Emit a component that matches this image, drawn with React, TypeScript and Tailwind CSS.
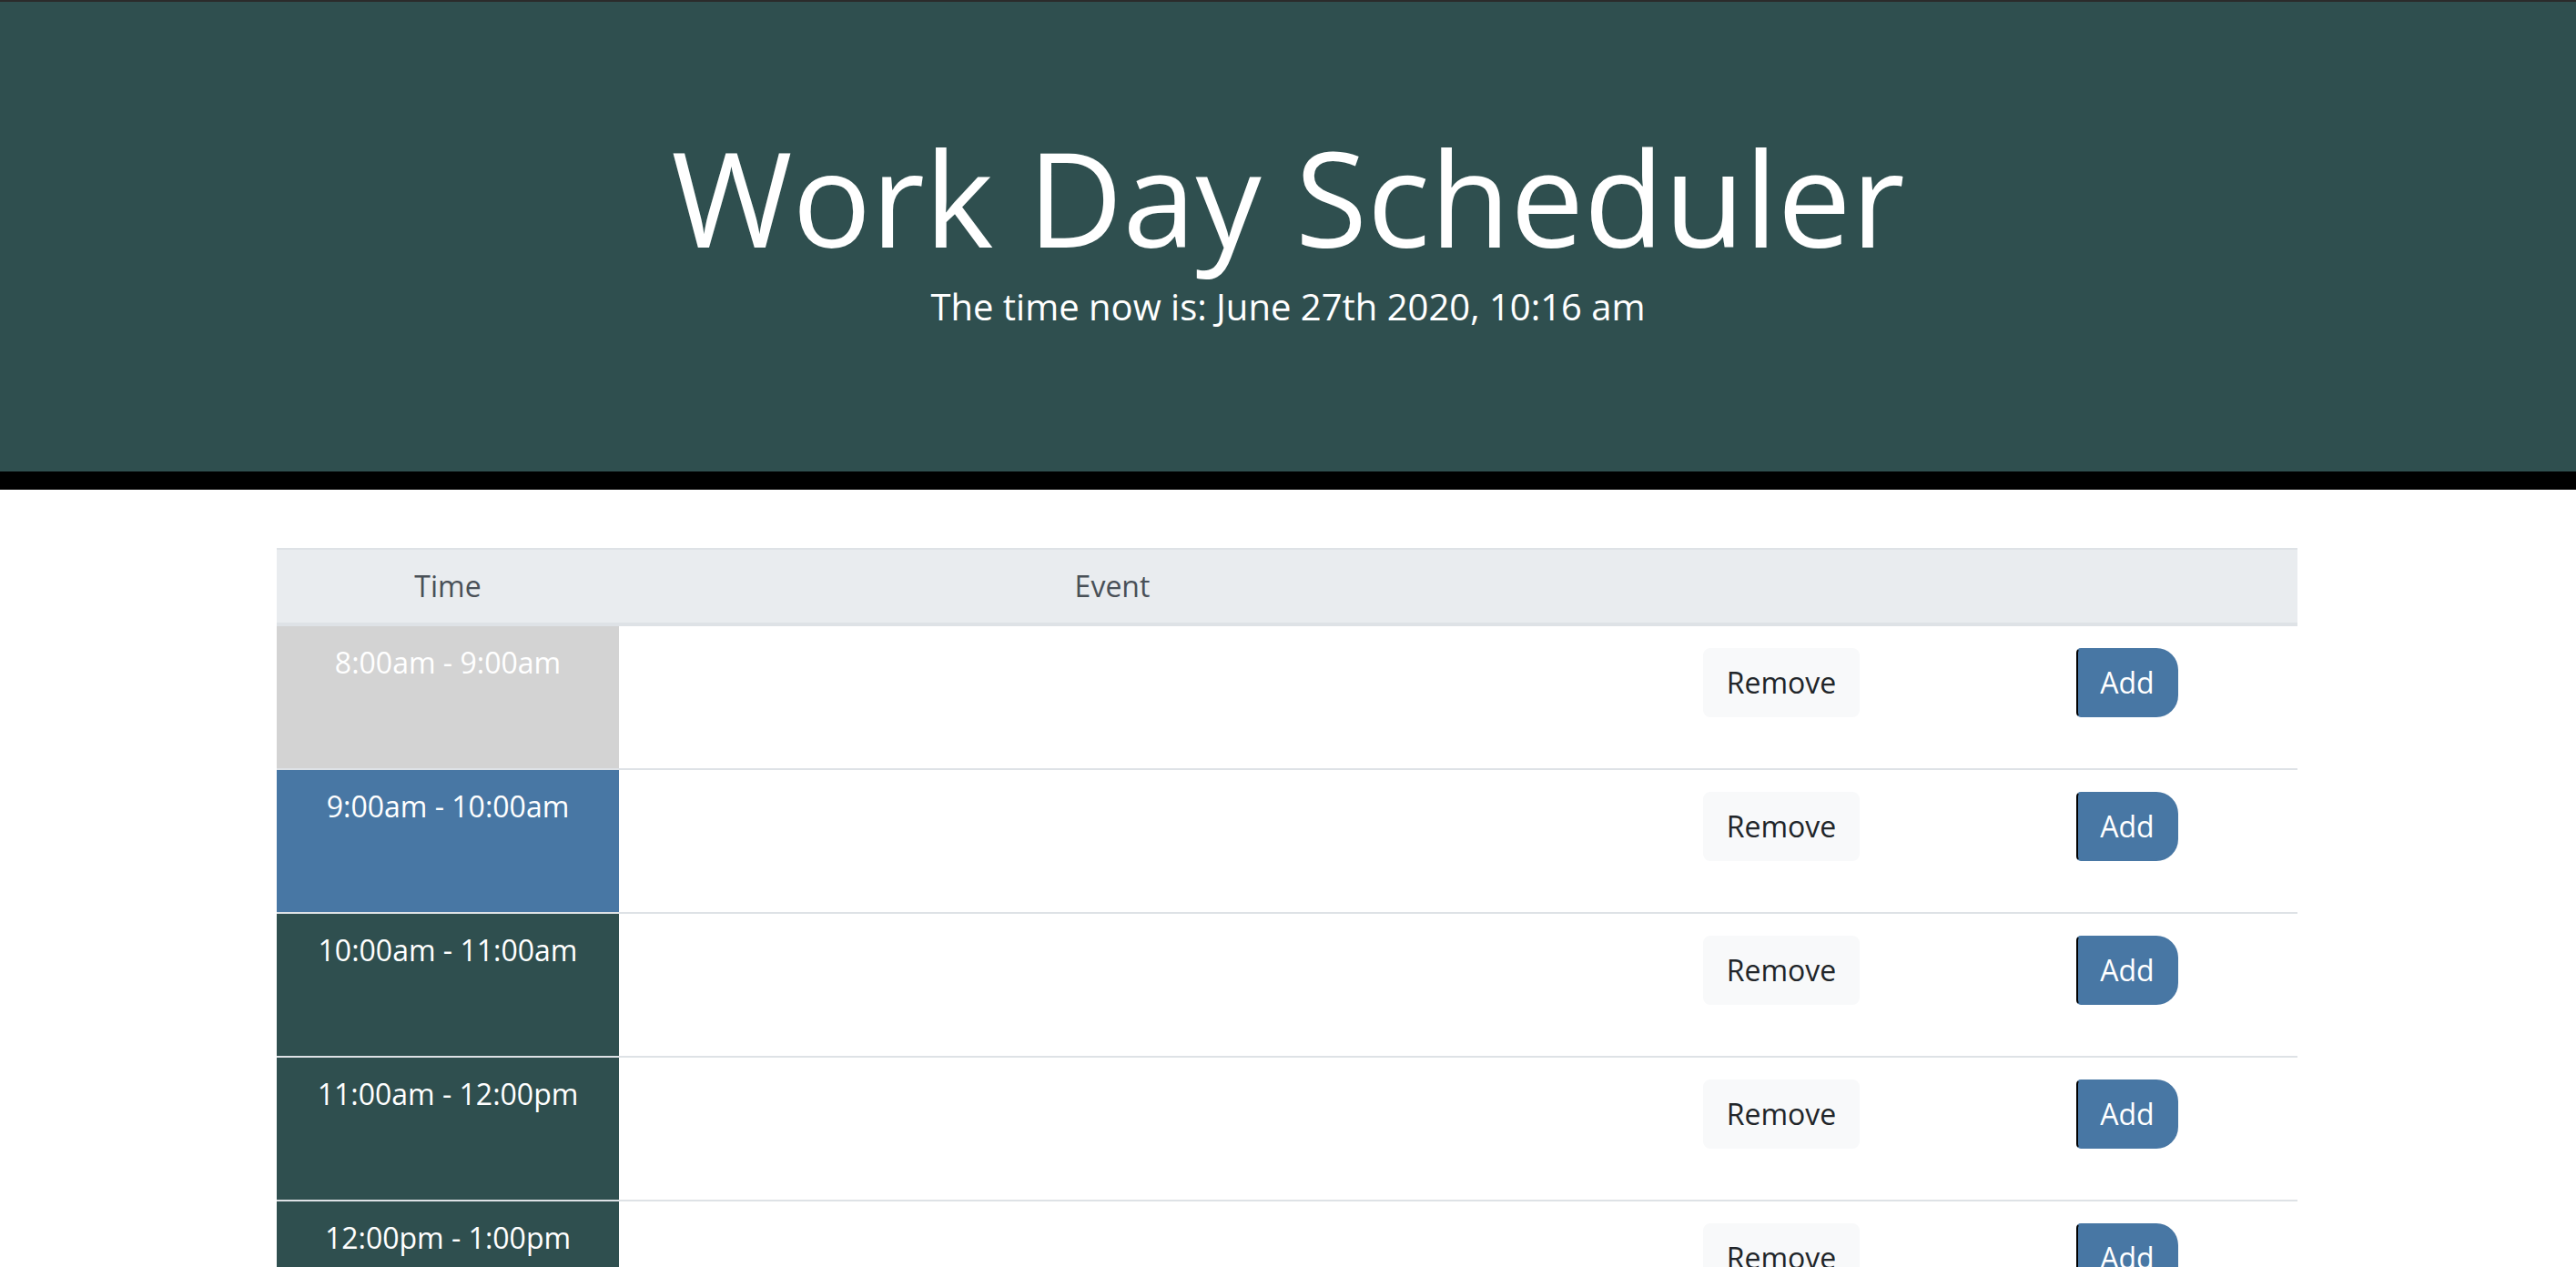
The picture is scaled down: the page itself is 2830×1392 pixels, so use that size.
import React from "react";

type Slot = { label: string; tone: "past" | "present" | "future" };

const slots: Slot[] = [
  { label: "8:00am - 9:00am", tone: "past" },
  { label: "9:00am - 10:00am", tone: "present" },
  { label: "10:00am - 11:00am", tone: "future" },
  { label: "11:00am - 12:00pm", tone: "future" },
  { label: "12:00pm - 1:00pm", tone: "future" },
  { label: "1:00pm - 2:00pm", tone: "future" },
  { label: "2:00pm - 3:00pm", tone: "future" },
  { label: "3:00pm - 4:00pm", tone: "future" },
  { label: "4:00pm - 5:00pm", tone: "future" },
];

const toneClass = {
  past: "bg-[#d3d3d3]",
  present: "bg-[#4877a4]",
  future: "bg-[#2f4f4f]",
};

function Row({ slot }: { slot: Slot }) {
  return (
    <div className="flex h-[158px] border-b-2 border-[#dee2e6]">
      {/* time block */}
      <div
        className={`w-[376px] shrink-0 pt-4 text-center text-white text-[32px] leading-[48px] ${toneClass[slot.tone]}`}
      >
        {slot.label}
      </div>

      {/* event text area */}
      <textarea className="w-[1084px] shrink-0 resize-none bg-white outline-none text-[32px] leading-[48px] p-4 text-[#212529]" />

      <div className="w-[386px] shrink-0 flex justify-center pt-6">
        <button className="h-[76px] px-6 border-2 border-[#f8f9fa] bg-[#f8f9fa] rounded-[8px] text-[#212529] text-[32px] leading-[48px]">
          Remove
        </button>
      </div>

      <div className="w-[374px] shrink-0 flex justify-center pt-6">
        <button className="h-[76px] px-6 border-2 border-[#4877a4] border-l-black bg-[#4877a4] rounded-l-[5px] rounded-r-[24px] text-white text-[32px] leading-[48px]">
          Add
        </button>
      </div>
    </div>
  );
}

export default function App() {
  return (
    <div className="min-h-screen bg-white font-['Open_Sans',sans-serif]">
      {/* window edge */}
      <div className="h-[2px] bg-[#2b2b2b]" />

      {/* --- HEADER --- */}
      <header className="h-[536px] bg-[#2f4f4f] border-b-[20px] border-black pt-[128px] text-center text-white">
        <h1 className="text-[144px] leading-[1.2] font-normal">
          Work Day Scheduler
        </h1>
        <p className="mt-[4px] text-[40px] leading-[60px] font-normal">
          The time now is: June 27th 2020, 10:16 am
        </p>
      </header>

      {/* --- SCHEDULE TABLE --- */}
      <main className="ml-[304px] w-[2220px] mt-[64px]">
        <div className="flex h-[86px] bg-[#e9ecef] border-t-2 border-b-4 border-[#dee2e6] text-[#495057] text-[32px] leading-[48px]">
          <div className="w-[376px] pt-4 text-center">Time</div>
          <div className="w-[1084px] pt-4 text-center">Event</div>
          <div className="w-[386px]" />
          <div className="w-[374px]" />
        </div>

        {slots.map((s) => (
          <Row key={s.label} slot={s} />
        ))}
      </main>
    </div>
  );
}
